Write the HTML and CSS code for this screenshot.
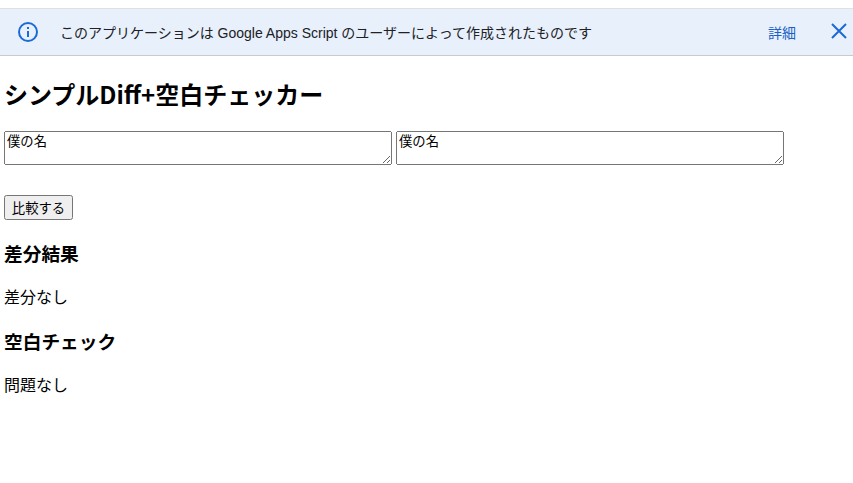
FILE: index.html
```html
<!DOCTYPE html>
<html lang="ja">
<head>
<meta charset="utf-8">
<title>シンプルDiff+空白チェッカー</title>
<link rel="stylesheet" href="styles.css">
</head>
<body>
<div class="banner">
  <svg class="info" width="24" height="24" viewBox="0 0 24 24"><circle cx="12" cy="12" r="9" fill="none" stroke="#1a6ad8" stroke-width="2"/><rect x="11" y="11" width="2" height="6" fill="#1a6ad8"/><rect x="11" y="7" width="2" height="2" fill="#1a6ad8"/></svg>
  <span class="msg">このアプリケーションは Google Apps Script のユーザーによって作成されたものです</span>
  <a class="more">詳細</a>
  <svg class="close" width="18" height="18" viewBox="0 0 18 18"><path d="M2 1 L16 15 M16 1 L2 15" stroke="#1a6ad8" stroke-width="2" fill="none"/></svg>
</div>
<main class="content">
  <h1>シンプルDiff+空白チェッカー</h1>
  <div class="inputs">
    <textarea class="box">僕の名</textarea>
    <textarea class="box">僕の名</textarea>
  </div>
  <button class="cmp">比較する</button>
  <h2>差分結果</h2>
  <p>差分なし</p>
  <h2>空白チェック</h2>
  <p>問題なし</p>
</main>
</body>
</html>
```
FILE: styles.css
```css
html, body { margin: 0; padding: 0; background: #fff; }
body { font-family: "Noto Sans CJK JP", "Liberation Sans", sans-serif; color: #000; font-size: 16px; }
.banner {
  box-sizing: border-box;
  margin-top: 8px;
  height: 48px;
  background: #e8f0fc;
  border-top: 1px solid #dfe1e5;
  border-bottom: 1px solid #c8ccd2;
  display: flex;
  align-items: center;
  padding: 0 4px 0 16px;
}
.info { flex: none; }
.msg { margin-left: 20px; flex: 1; font-size: 14px; color: #202124; font-family: "Liberation Sans", "Noto Sans CJK JP", sans-serif; }
.more { font-size: 14px; color: #1a62c8; margin-right: 34px; font-family: "Liberation Sans", "Noto Sans CJK JP", sans-serif; }
.close { flex: none; margin-right: 1px; }
.content { padding: 0 4px; }
h1 { font-size: 24px; font-weight: 700; margin: 20px 0 20px; line-height: 35px; }
h2 { font-size: 18.72px; font-weight: 700; margin: 19.5px 0 18px; }
.inputs { display: flex; gap: 4px; }
.box {
  box-sizing: border-box;
  width: 388px;
  height: 34px;
  margin: 0;
  padding: 2px;
  font: 13.33px "Liberation Sans", "Noto Sans CJK JP", sans-serif;
  line-height: 15px;
}
.cmp {
  display: block;
  margin: 30px 0 -1px;
  width: 69px;
  height: 25px;
  padding: 0;
  font: 13.33px "Liberation Sans", "Noto Sans CJK JP", sans-serif;
}
p { margin: 16px 0; }
```
